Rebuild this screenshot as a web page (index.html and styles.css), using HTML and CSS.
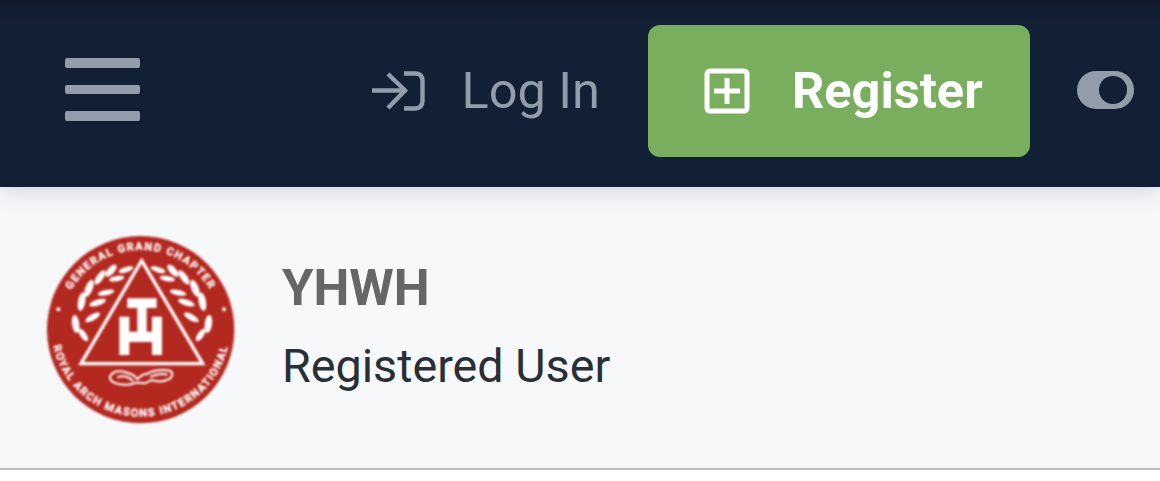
FILE: index.html
```html
<!DOCTYPE html>
<html lang="en">

<head>
	<meta charset="UTF-8">
	<meta name="viewport" content="width=device-width, initial-scale=1.0">
	<title>YHWH</title>
	<link rel="stylesheet" href="styles.css">
</head>

<body>
	<header class="topbar">
		<div class="burger">
			<span></span>
			<span></span>
			<span></span>
		</div>

		<a class="login">
			<svg class="login-icon" width="54" height="40" viewBox="0 0 54 40" fill="none" stroke="currentColor" stroke-width="4.400">
				<path d="M0 19.500H33"/>
				<path d="M16 3L33 19.500L16 37"/>
				<path d="M32 2.500H43Q50.500 2.500 50.500 10V29.500Q50.500 37.500 43 37.500H32"/>
			</svg>
			<span>Log In</span>
		</a>

		<a class="register">
			<svg width="46" height="46" viewBox="0 0 46 46" fill="none" stroke="#fff" stroke-width="5">
				<rect x="3" y="3" width="40" height="40" rx="3"/>
				<path d="M23 10V36M10 23H36"/>
			</svg>
			<span>Register</span>
		</a>

		<div class="toggle"><i></i></div>
	</header>

	<section class="profile">
		<svg class="avatar" width="190" height="188" viewBox="48 48 570 564">
			<defs>
				<path id="arc-top" d="M92 330A240 240 0 0 1 572 330"/>
				<path id="arc-bottom" d="M64 322A268 268 0 0 0 600 322"/>
				<g id="laurel" fill="#fff">
					<ellipse cx="137" cy="312" rx="11" ry="27" transform="rotate(-8 137 312)"/>
					<ellipse cx="160" cy="345" rx="9" ry="22" transform="rotate(-35 160 345)"/>
					<ellipse cx="155" cy="245" rx="11" ry="28" transform="rotate(10 155 245)"/>
					<ellipse cx="188" cy="292" rx="9" ry="25" transform="rotate(60 188 292)"/>
					<ellipse cx="177" cy="205" rx="11" ry="27" transform="rotate(22 177 205)"/>
					<ellipse cx="203" cy="248" rx="9" ry="26" transform="rotate(72 203 248)"/>
					<ellipse cx="210" cy="172" rx="10" ry="25" transform="rotate(35 210 172)"/>
					<ellipse cx="228" cy="218" rx="8" ry="25" transform="rotate(78 228 218)"/>
					<ellipse cx="243" cy="152" rx="10" ry="23" transform="rotate(42 243 152)"/>
					<ellipse cx="260" cy="176" rx="8" ry="23" transform="rotate(80 260 176)"/>
					<ellipse cx="288" cy="149" rx="8" ry="23" transform="rotate(72 288 149)"/>
				</g>
			</defs>
			<circle cx="332" cy="329" r="281" fill="#b3281f"/>
			<text class="seal-text"><textPath href="#arc-top" startOffset="50%" text-anchor="middle">GENERAL GRAND CHAPTER</textPath></text>
			<text class="seal-text"><textPath href="#arc-bottom" startOffset="50%" text-anchor="middle">ROYAL ARCH MASONS INTERNATIONAL</textPath></text>
			<circle cx="85" cy="268" r="6" fill="#fff"/>
			<circle cx="582" cy="268" r="6" fill="#fff"/>
			<use href="#laurel"/>
			<use href="#laurel" transform="matrix(-1 0 0 1 672 0)"/>
			<path d="M335 122L518 431H153Z" fill="#b3281f" stroke="#fff" stroke-width="10"/>
			<path d="M292 235H380V264H350V335H366V290H396V405H366V366H298V405H268V290H298V335H322V264H292Z" fill="#fff"/>
			<path d="M240 470Q250 448 285 456Q315 464 322 478Q336 462 350 462Q380 446 420 452Q434 462 420 476Q395 490 365 480L345 490L320 488Q290 500 258 490Q238 484 240 470ZM262 472Q290 462 310 484M360 470Q390 458 412 464" fill="none" stroke="#fff" stroke-width="6"/>
		</svg>

		<div class="who">
			<h2>YHWH</h2>
			<p>Registered User</p>
		</div>
	</section>
</body>

</html>
```

FILE: styles.css
```css
* {
	margin: 0;
	padding: 0;
	box-sizing: border-box;
	font-family: Roboto, "Liberation Sans", sans-serif;
}

body {
	height: 481px;
	background: #fff;
	overflow: hidden;
}

.topbar {
	display: flex;
	align-items: center;
	height: 187px;
	padding: 0 26px 6px 65px;
	background-image: linear-gradient(#101b2e, #122036 30px, #122035);
	position: relative;
	z-index: 1;
	box-shadow: 0 4px 22px rgba(20, 30, 50, 0.16);
}

.burger {
	display: flex;
	flex-direction: column;
	gap: 17px;
	width: 75px;
	margin-bottom: 2px;
}

.burger span {
	display: block;
	height: 9.500px;
	background: #919dab;
	border-radius: 2px;
}

.login {
	display: flex;
	align-items: center;
	gap: 35px;
	margin-left: auto;
	color: #919dab;
	font-size: 50.500px;
}

.register {
	display: flex;
	align-items: center;
	gap: 42px;
	width: 382px;
	height: 132px;
	margin-left: 48px;
	padding-left: 56px;
	background: #7aae5f;
	border-radius: 12px;
	color: #fff;
	font-size: 50.500px;
	font-weight: 700;
}

.toggle {
	display: flex;
	align-items: center;
	justify-content: flex-end;
	width: 57px;
	height: 38px;
	margin-left: 47px;
	margin-bottom: 1px;
	padding-right: 7px;
	background: #919dab;
	border-radius: 19px;
}

.toggle i {
	display: block;
	width: 28px;
	height: 28px;
	background: #122035;
	border-radius: 50%;
}

.profile {
	display: flex;
	align-items: center;
	gap: 46px;
	height: 283px;
	padding: 4px 0 0 46px;
	background: #f7f8fa;
	border-bottom: 2px solid #bcbcbc;
}

.avatar {
	filter: blur(0.9px);
}

.seal-text {
	fill: #fff;
	stroke: #fff;
	stroke-width: 1px;
	font-size: 33px;
	font-weight: 700;
	letter-spacing: 4px;
}

.who {
	padding-bottom: 8px;
}

.who h2 {
	color: #666;
	font-size: 50.800px;
	font-weight: 700;
	line-height: 56px;
}

.who p {
	margin-top: 24px;
	color: #2a2f36;
	font-size: 46.700px;
	line-height: 52px;
}
```
